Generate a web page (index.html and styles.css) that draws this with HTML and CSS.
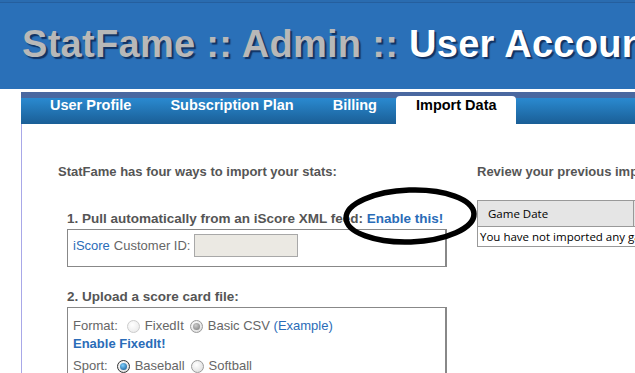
FILE: index.html
```html
<!DOCTYPE html>
<html lang="en">
<head>
  <meta charset="UTF-8" />
  <title>StatFame :: Admin :: User Account</title>
  <link rel="stylesheet" href="styles.css">
</head>
<body>

<div class="header">
  <h1><span class="dim">StatFame :: Admin ::</span> User Account</h1>
</div>

<div class="tabs">
  <a class="tab">User Profile</a>
  <a class="tab">Subscription Plan</a>
  <a class="tab">Billing</a>
  <a class="tab active">Import Data</a>
</div>

<div class="content">
  <div class="left">
    <p class="intro">StatFame has four ways to import your stats:</p>

    <div class="section">
      <h3>1. Pull automatically from an iScore XML feed: <a class="link">Enable this!</a></h3>
      <div class="box">
        <a class="plain-link">iScore</a> Customer ID: <span class="input"></span>
      </div>
    </div>

    <div class="section">
      <h3>2. Upload a score card file:</h3>
      <div class="box box-tall">
        <div class="row">
          <span>Format:</span>
          <span class="radio off first"></span><span>FixedIt</span>
          <span class="radio on-gray"></span><span>Basic CSV&nbsp;<a class="plain-link">(Example)</a></span>
        </div>
        <a class="link enable">Enable FixedIt!</a>
        <div class="row">
          <span>Sport:</span>
          <span class="radio on first"></span><span>Baseball</span>
          <span class="radio"></span><span>Softball</span>
        </div>
      </div>
    </div>
  </div>

  <div class="right">
    <p class="intro">Review your previous imports:</p>
    <table class="imports">
      <tr><th class="date">Game Date</th><th>Opponent</th></tr>
      <tr><td colspan="2">You have not imported any games yet.</td></tr>
    </table>
  </div>

  <!-- hand-drawn highlight -->
  <svg class="circle" width="140" height="64" viewBox="0 0 140 64">
    <ellipse cx="70" cy="30" rx="64" ry="26" fill="none" stroke="#000" stroke-width="5.5" transform="rotate(-2 70 30)"/>
  </svg>
</div>

</body>
</html>
```

FILE: styles.css
```css
* {
  box-sizing: border-box;
  margin: 0;
  padding: 0;
}

html {
  overflow: hidden;
}

body {
  font-family: "Liberation Sans", Arial, sans-serif;
  font-size: 13px;
  color: #555;
  background: #fff;
  width: 900px;
  overflow: hidden;
}

.header {
  height: 89px;
  background: #2a70b8;
  border-top: 2px solid #2a6cb0;
  box-shadow: inset 0 1px 0 #255f9e;
  padding: 22px 0 0 22px;
}

.header h1 {
  font-size: 38px;
  line-height: 40px;
  letter-spacing: 0.3px;
  font-weight: bold;
  color: #fff;
  white-space: nowrap;
  text-shadow: 2px 2px 1px rgba(10, 30, 70, 0.75);
}

.header .dim {
  color: #b8b8b8;
}

.tabs {
  margin: 3px 0 0 21px;
  height: 32px;
  display: flex;
  align-items: flex-end;
  padding-left: 9.5px;
  background: linear-gradient(#4a68a0 0, #4a68a0 6px, #2a8ad0 6px, #1a5e96 100%);
}

.tab {
  display: block;
  height: 28px;
  padding: 1px 19.5px 0;
  line-height: 16px;
  font-weight: bold;
  font-size: 14.5px;
  color: #fff;
}

.tab.active {
  background: #fff;
  color: #000;
  border-radius: 4px 4px 0 0;
}

.content {
  position: relative;
  margin-left: 21px;
  border-left: 1px solid #a8a8e8;
  display: flex;
  padding-top: 40px;
  min-height: 260px;
}

.left {
  width: 455px;
  padding-left: 36px;
}

.intro {
  font-weight: bold;
  line-height: 16px;
}

.section {
  margin: 31px 0 0 9px;
  width: 380px;
}

.section + .section {
  margin-top: 22px;
}

.section h3 {
  font-size: 13.5px;
  line-height: 16px;
  margin-bottom: 2px;
}

.link {
  color: #2a6cb8;
  font-weight: bold;
}

.plain-link {
  color: #2a6cb8;
}

.box {
  border: 1px solid #888;
  border-right-width: 2px;
  padding: 4px 5px 9px;
  display: flex;
  align-items: center;
  gap: 4px;
  color: #666;
}

.box-tall {
  display: block;
  padding: 10px 5px 20px;
  height: 90px;
}

.input {
  display: inline-block;
  width: 104px;
  height: 23px;
  background: #ebe9e3;
  border: 1px solid #a8a8a8;
}

.row {
  display: flex;
  align-items: center;
  line-height: 16px;
}

.enable {
  display: block;
  line-height: 16px;
  margin: 2px 0 6px;
}

.radio {
  display: inline-block;
  flex: none;
  width: 13px;
  height: 13px;
  border-radius: 50%;
  border: 1px solid #9a9a9a;
  background: radial-gradient(circle at 40% 35%, #fff, #d8d8d8);
  margin: 0 5px 0 6px;
  position: relative;
}

.radio.first {
  margin-left: 9px;
}

.radio.off {
  border-color: #ccc;
  background: radial-gradient(circle at 40% 35%, #fff, #e6e6e6);
}

.radio.on-gray::after,
.radio.on::after {
  content: "";
  position: absolute;
  left: 2px;
  top: 2px;
  width: 7px;
  height: 7px;
  border-radius: 50%;
  background: radial-gradient(circle at 40% 35%, #ccc, #777);
}

.radio.on {
  border-color: #333;
}

.radio.on::after {
  background: radial-gradient(circle at 40% 35%, #7fd0ff, #0a4f8a);
}

.imports {
  margin-top: 20px;
  border-collapse: collapse;
  table-layout: fixed;
  font-family: "Open Sans", "DejaVu Sans", sans-serif;
  font-size: 11.5px;
  color: #000;
  width: 306px;
}

.imports th {
  text-align: left;
  font-weight: normal;
  background: #e5e5e5;
  border: 1px solid #999;
  height: 26px;
  padding: 0 10px;
}

.imports th.date {
  width: 156px;
}

.imports td {
  border: 1px solid #999;
  height: 20px;
  padding: 0 2px;
  white-space: nowrap;
  overflow: hidden;
}

.circle {
  position: absolute;
  left: 318px;
  top: 62px;
}
```
